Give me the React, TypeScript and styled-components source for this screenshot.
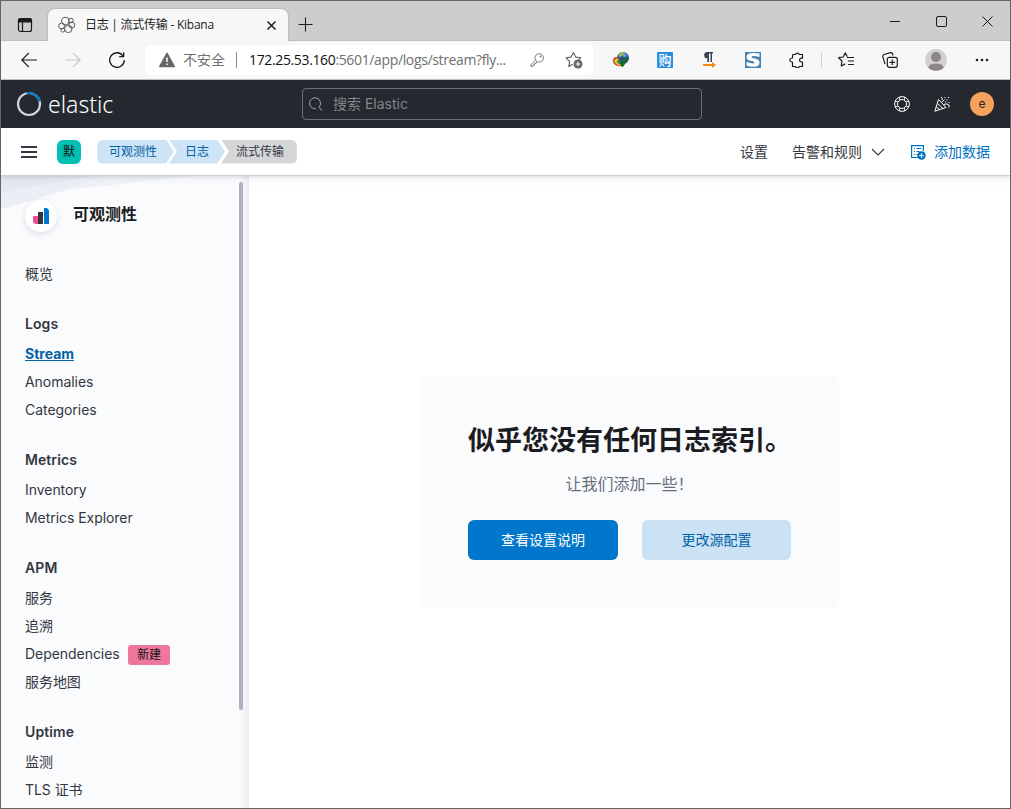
import React from 'react';
import styled, { createGlobalStyle, css } from 'styled-components';

const Global = createGlobalStyle`
  * { box-sizing: border-box; }
  html, body { margin: 0; padding: 0; overflow: hidden; }
  body { font-family: Inter, "Noto Sans CJK SC", sans-serif; font-size: 14px; color: #343741; background: #fff; }
`;

const Window = styled.div`
  width: 1011px;
  height: 809px;
  border: 1px solid #656365;
  display: flex;
  flex-direction: column;
  background: #fff;
  overflow: hidden;
`;

const TabStrip = styled.div`
  height: 40px;
  flex: none;
  display: flex;
  align-items: flex-end;
  background: #cdcdcd;
  border-bottom: 1px solid #c0c0c0;
`;

const Cell = styled.div<{ $w: number; $h?: number }>`
  width: ${(p) => p.$w}px;
  height: ${(p) => (p.$h ? `${p.$h}px` : '100%')};
  flex: none;
  display: flex;
  align-items: center;
  justify-content: center;
  svg { display: block; }
`;

const Tab = styled.div`
  width: 240px;
  height: 32px;
  margin-bottom: -1px;
  padding: 0 9px 0 10px;
  display: flex;
  align-items: center;
  background: #f7f7f7;
  border-radius: 7px 7px 0 0;
  box-shadow: 0 0 2px rgba(0, 0, 0, 0.25);
  clip-path: inset(-3px -3px 0 -3px);
  svg { display: block; flex: none; }
`;

const TabTitle = styled.span`
  margin-left: 9px;
  flex: 1;
  font: 12px/16px "Open Sans", "Noto Sans CJK SC", sans-serif;
  letter-spacing: -0.25px;
  color: #1b1b1b;
  white-space: nowrap;
`;

const Spacer = styled.div`
  flex: 1;
`;

const WindowControls = styled.div`
  height: 100%;
  padding-top: 1px;
  display: flex;
`;

const Toolbar = styled.div`
  height: 39px;
  flex: none;
  padding-left: 6px;
  display: flex;
  align-items: center;
  background: #f7f7f7;
  border-bottom: 1px solid #bcc0c2;
`;

const AddressBar = styled.div`
  width: 448px;
  height: 30px;
  margin: 0 6px;
  padding-left: 14px;
  display: flex;
  align-items: center;
  background: #fff;
  border-radius: 4px;
  font: 14px/20px "Open Sans", "Noto Sans CJK SC", sans-serif;
  color: #6f6f6f;
  white-space: nowrap;
  svg { display: block; flex: none; }
`;

const Insecure = styled.span`
  width: 54px;
  flex: none;
  margin-left: 8px;
  border-right: 1px solid #8a8a8a;
  line-height: 16px;
`;

const Url = styled.span`
  width: 272px;
  flex: none;
  margin-left: 12px;
  letter-spacing: -0.36px;
  b { font-weight: 400; color: #111; }
`;

const Divider = styled.div`
  width: 1px;
  height: 16px;
  margin: 0 2px;
  background: #d0d0d0;
`;

const BuyBadge = styled.div`
  width: 16px;
  height: 16px;
  background: #2b8ddf;
  border-radius: 1px;
  color: #fff;
  font: 500 13px/15px "Noto Sans CJK SC", sans-serif;
  text-align: center;
`;

const Header = styled.header`
  height: 48px;
  flex: none;
  display: grid;
  grid-template-columns: 301px 400px 1fr;
  align-items: center;
  background: #25282f;
`;

const Brand = styled.div`
  display: flex;
  align-items: center;
  padding-left: 15px;
  svg { display: block; }
`;

const Wordmark = styled.span`
  margin-left: 6px;
  font: 350 23px/28px "Noto Sans", "Open Sans", sans-serif;
  letter-spacing: 0;
  color: #fff;
`;

const Search = styled.div`
  height: 32px;
  padding-left: 5px;
  display: flex;
  align-items: center;
  gap: 9px;
  border: 1px solid #6c6f75;
  border-radius: 4px;
  color: #83868c;
  svg { display: block; }
  span { padding-bottom: 2px; }
`;

const HeaderActions = styled.div`
  display: flex;
  justify-content: flex-end;
  align-items: center;
  padding-right: 8px;
`;

const Avatar = styled.div`
  width: 24px;
  height: 24px;
  border-radius: 50%;
  background: #f5a35c;
  color: #222;
  font-size: 12px;
  line-height: 24px;
  text-align: center;
`;

const SubHeader = styled.nav`
  height: 48px;
  flex: none;
  position: relative;
  z-index: 1;
  display: flex;
  align-items: center;
  background: #fff;
  border-bottom: 1px solid #cbd0dc;
  box-shadow: 0 1px 3px rgba(60, 70, 100, 0.14), 0 3px 10px rgba(60, 70, 100, 0.06);
`;

const Burger = styled.div`
  width: 16px;
  height: 12px;
  margin: 0 20px;
  display: flex;
  flex-direction: column;
  justify-content: space-between;
  i { height: 2px; background: #343741; }
`;

const Space = styled.div`
  width: 24px;
  height: 24px;
  margin-right: 16px;
  border-radius: 6px;
  background: #00bfb3;
  color: #111;
  font-size: 12px;
  line-height: 23px;
  text-align: center;
`;

const Crumb = styled.span<{ $kind: 'first' | 'mid' | 'last' }>`
  height: 24px;
  font-size: 12px;
  line-height: 23px;
  background: #cce4f5;
  color: #0061a6;
  ${(p) => p.$kind === 'first' && css`
    width: 78px;
    padding-left: 12px;
    border-radius: 6px 0 0 6px;
    clip-path: polygon(0 0, 69px 0, 77px 50%, 69px 100%, 0 100%);
  `}
  ${(p) => p.$kind === 'mid' && css`
    width: 57px;
    margin-left: -6px;
    padding-left: 16px;
    clip-path: polygon(0 0, 48px 0, 56px 50%, 48px 100%, 0 100%, 8px 50%);
  `}
  ${(p) => p.$kind === 'last' && css`
    width: 76px;
    margin-left: -5px;
    padding-left: 15px;
    background: #d5d6d8;
    color: #343741;
    border-radius: 0 6px 6px 0;
    clip-path: polygon(0 0, 100% 0, 100% 100%, 0 100%, 8px 50%);
  `}
`;

const NavLink = styled.a<{ $kind?: 'menu' | 'primary' }>`
  display: flex;
  align-items: center;
  height: 24px;
  margin-right: ${(p) => (p.$kind === 'primary' ? 20 : p.$kind === 'menu' ? 16 : 24)}px;
  color: ${(p) => (p.$kind === 'primary' ? '#0071c2' : '#343741')};
  svg { display: block; }
`;

const DataIcon = styled.span`
  width: 24px;
  margin-left: -3px;
  margin-right: 3px;
  padding-left: 4px;
`;

const NavText = styled.span`
  padding-bottom: 2px;
`;

const Body = styled.div`
  flex: 1;
  min-height: 0;
  display: flex;
`;

const Sidebar = styled.aside`
  width: 248px;
  flex: none;
  padding-top: 6px;
  display: flex;
  background: linear-gradient(90deg, transparent 238px, #eceef2 248px), #fafbfd;
  position: relative;
`;

const Backdrop = styled.svg`
  position: absolute;
  left: 0;
  top: 0;
`;

const SideContent = styled.div`
  position: relative;
  width: 238px;
  padding: 18px 0 0 24px;
  overflow: hidden;
`;

const ScrollThumb = styled.div`
  width: 4px;
  height: 528px;
  border-radius: 2px;
  background: #adb1bb;
`;

const Solution = styled.div`
  display: flex;
  align-items: center;
  height: 32px;
  margin-bottom: 28px;
`;

const SolutionIcon = styled.div`
  width: 32px;
  height: 32px;
  border-radius: 50%;
  background: #fff;
  display: flex;
  align-items: center;
  justify-content: center;
  box-shadow: 0 2px 6px rgba(60, 70, 100, 0.16);
`;

const SolutionTitle = styled.h2`
  margin: 0 0 4px 16px;
  font-size: 16px;
  line-height: 24px;
  font-weight: 700;
  color: #1a1c21;
`;

const Group = styled.section`
  margin-bottom: 22px;
`;

const GroupTitle = styled.h3`
  margin: 0 0 2px;
  font-size: 14px;
  line-height: 28px;
  font-weight: 600;
  color: #343741;
  letter-spacing: 0.08px;
`;

const Item = styled.a<{ $active?: boolean }>`
  display: flex;
  align-items: center;
  height: 28px;
  padding-bottom: 2px;
  color: #343741;
  letter-spacing: -0.05px;
  ${(p) => p.$active && css`
    color: #0061a6;
    font-weight: 700;
    text-decoration: underline;
    letter-spacing: 0;
  `}
`;

const NewBadge = styled.span`
  width: 42px;
  height: 20px;
  margin: 4px 0 0 8.5px;
  border-radius: 3px;
  background: #ee789d;
  color: #111;
  font-size: 12px;
  line-height: 19px;
  text-align: center;
`;

const Main = styled.main`
  flex: 1;
  padding: 200px 0 0 171px;
`;

const Prompt = styled.div`
  width: 419px;
  height: 232px;
  padding: 49px 48px 48px;
  border-radius: 6px;
  background: #fafbfd;
  text-align: center;
`;

const PromptTitle = styled.h1`
  margin: 0;
  font-size: 27px;
  line-height: 32px;
  font-weight: 700;
  color: #1a1c21;
  white-space: nowrap;
`;

const PromptText = styled.p`
  margin: 15px 0 24px;
  font-size: 16px;
  line-height: 24px;
  color: #69707d;
`;

const PromptActions = styled.div`
  display: grid;
  grid-template-columns: 150px 149px;
  gap: 24px;
`;

const Button = styled.button<{ $fill?: boolean }>`
  height: 40px;
  padding: 0;
  border: 0;
  border-radius: 6px;
  font: 400 14px/20px Inter, "Noto Sans CJK SC", sans-serif;
  background: ${(p) => (p.$fill ? '#0077cc' : '#cbe2f4')};
  color: ${(p) => (p.$fill ? '#fff' : '#0061a6')};
`;

type IconProps = { s?: number; c?: string; w?: number; children: React.ReactNode };
const Icon = ({ s = 16, c = '#1b1b1b', w = 1.1, children }: IconProps) => (
  <svg width={s} height={s} viewBox={`0 0 ${s} ${s}`} fill="none" stroke={c} strokeWidth={w}>
    {children}
  </svg>
);

const groups: { title: string; items: { label: string; active?: boolean; badge?: string }[] }[] = [
  { title: 'Logs', items: [{ label: 'Stream', active: true }, { label: 'Anomalies' }, { label: 'Categories' }] },
  { title: 'Metrics', items: [{ label: 'Inventory' }, { label: 'Metrics Explorer' }] },
  { title: 'APM', items: [{ label: '服务' }, { label: '追溯' }, { label: 'Dependencies', badge: '新建' }, { label: '服务地图' }] },
  { title: 'Uptime', items: [{ label: '监测' }, { label: 'TLS 证书' }] },
];

const BrowserTabs = () => (
  <TabStrip>
    <Cell $w={47} $h={30}>
      <Icon w={1.2}>
        <rect x="1.5" y="1.5" width="13" height="13" rx="2" />
        <path d="M1.5 3.5a2 2 0 0 1 2-2h9a2 2 0 0 1 2 2V5h-13z" fill="#1b1b1b" />
        <path d="M5.5 5v9.5" />
      </Icon>
    </Cell>
    <Tab>
      <Icon s={18} c="#5c5c5c" w={1}>
        <circle cx="7.3" cy="5" r="3.8" />
        <circle cx="13" cy="4.5" r="2.3" />
        <circle cx="3.6" cy="10" r="2.9" />
        <circle cx="13.8" cy="9" r="3" />
        <circle cx="10.3" cy="12.9" r="3.7" />
        <circle cx="4.8" cy="14.2" r="1.9" />
      </Icon>
      <TabTitle>日志 | 流式传输 - Kibana</TabTitle>
      <Icon w={1.5}><path d="M4.5 4.5l8 8M12.5 4.5l-8 8" /></Icon>
    </Tab>
    <Cell $w={35} $h={31}>
      <Icon s={15}><path d="M7.5 .5v14M.5 7.5h14" /></Icon>
    </Cell>
    <Spacer />
    <WindowControls>
      <Cell $w={46}><Icon s={10} w={1}><path d="M0 5.5h10" /></Icon></Cell>
      <Cell $w={46}><Icon s={11} w={1}><rect x=".5" y=".5" width="10" height="10" rx="1.5" /></Icon></Cell>
      <Cell $w={46}><Icon s={11} w={1}><path d="M.5 .5l10 10M10.5 .5l-10 10" /></Icon></Cell>
    </WindowControls>
  </TabStrip>
);

const BrowserToolbar = () => (
  <Toolbar>
    <Cell $w={44}><Icon><path d="M16 8H.8M7.8 1L.8 8l7 7" /></Icon></Cell>
    <Cell $w={44}><Icon c="#c8c8c8"><path d="M0 8h15.2M8.2 1l7 7-7 7" /></Icon></Cell>
    <Cell $w={44}><Icon w={1.3}><path d="M14.2 4.2A7.3 7.3 0 1 0 15.3 8M14.7 .2v4.5h-4.5" /></Icon></Cell>
    <AddressBar>
      <Icon c="#666">
        <path d="M8 1.3L15.3 14.5H.7z" fill="#666" strokeLinejoin="round" strokeWidth={1.5} />
        <path d="M8 5.5v4.5M8 11.5v1.5" stroke="#fff" strokeWidth={1.5} />
      </Icon>
      <Insecure>不安全</Insecure>
      <Url><b>172.25.53.160</b>:5601/app/logs/stream?fly...</Url>
      <Cell $w={32}>
        <Icon c="#777" s={14} w={1}>
          <path d="M5.4 7.3L.8 11.9V13.3H3.2V11.8H4.7V10.3H6.2L7 8.7" strokeLinejoin="round" />
          <circle cx="9.2" cy="4.9" r="4.2" />
          <circle cx="10.6" cy="3.5" r=".6" />
        </Icon>
      </Cell>
      <Cell $w={42}>
        <Icon s={18} c="#5c5c5c" w={1.1}>
          <path d="M7.7 13.2l-3.9 2.2.8-5.1L1 6.8l5-.7 2.5-4.6 2.2 4.6 5 .7-2.5 2.3" strokeLinejoin="round" />
          <circle cx="13" cy="13" r="4.5" fill="#666" stroke="none" />
          <path d="M13 10.7v4.6M10.7 13h4.6" stroke="#fff" />
        </Icon>
      </Cell>
    </AddressBar>
    <Cell $w={44}>
      <svg width="18" height="16" viewBox="0 0 18 16">
        <circle cx="11" cy="6" r="6" fill="#264f94" />
        <path d="M6.5 2.5q3-3.5 6.5-2l-2 3-4 2z" fill="#9db84a" />
        <path d="M11 1.5q3-1 4 2l-2 2-2-1z" fill="#5f9fe0" />
        <path d="M1 9Q1 4.5 5 5l2 2 3 7Q1.5 15 1 9z" fill="#d9432f" />
        <path d="M2.5 9Q3 6 5.5 6.5L10 13q-6.5 1-7.5-4z" fill="#f0d43a" />
        <path d="M4.5 9.5Q5 7.5 7 8l3 4.5q-4.5 0-5.5-3z" fill="#3b9a3d" />
        <path d="M16.5 7L10.5 15.5 6.5 9.5l2.5.3L12 5z" fill="#176a28" />
      </svg>
    </Cell>
    <Cell $w={44}><BuyBadge>购</BuyBadge></Cell>
    <Cell $w={44}>
      <svg width="16" height="16" viewBox="0 0 16 16">
        <path d="M12 0v1.5h-1V10H9.5V1.5H8V10H6.3V6.3A3.15 3.15 0 0 1 6.3 0z" fill="#3b4653" />
        <path d="M2 12h9v-2l4 3-4 3v-2H2z" fill="#fb8713" />
      </svg>
    </Cell>
    <Cell $w={44}>
      <svg width="16" height="16" viewBox="0 0 16 16">
        <rect width="16" height="16" fill="#4682b4" />
        <path d="M14.5 1.5V5q-8-2.2-8 0 0 1 4 1.7 4 .8 4 4 0 4-6 4-4.5 0-7-1.2V10q8 2.5 8 .5 0-1-4-1.7-4-.8-4-3.9 0-3.9 6-3.9 4 0 7 .5z" fill="#fff" />
      </svg>
    </Cell>
    <Cell $w={44}>
      <Icon w={1.2}>
        <path d="M4.5 2.5h2a2 2 0 0 1 3.8 0h3.2v3.7h-1a1.9 1.9 0 0 0 0 3.8h1v4.5h-3.2a2 2 0 0 1-3.8 0h-3V10h-.6a2 2 0 0 1 0-4h.6V3.5a1 1 0 0 1 1-1z" strokeLinejoin="round" />
      </Icon>
    </Cell>
    <Divider />
    <Cell $w={44}>
      <Icon w={1.2}>
        <path d="M9.3 4.7L7.2 .9 5.2 5l-4.6.7L4 9l-.8 5 4-2.1M9 5.5h7M10 9h6M10 12.5h6" strokeLinejoin="round" />
      </Icon>
    </Cell>
    <Cell $w={44}>
      <Icon w={1.2}>
        <rect x="5.3" y="5.3" width="10" height="10" rx="2" />
        <path d="M10.3 7.5v5.6M7.5 10.3h5.6M3 12.2L.8 4.7q-.3-1.6 1.2-2.2L8.5.7q1.5-.3 2 1l.5 1.8" />
      </Icon>
    </Cell>
    <Cell $w={48}>
      <svg width="22" height="22" viewBox="0 0 22 22">
        <circle cx="11" cy="11" r="11" fill="#d2d0ce" />
        <circle cx="11" cy="8" r="5" fill="#8b8685" />
        <path d="M3.2 18.5a8 5 0 0 1 15.6 0A11 11 0 0 1 3.2 18.5z" fill="#8b8685" />
      </svg>
    </Cell>
    <Cell $w={44}>
      <svg width="14" height="4" viewBox="0 0 14 4" fill="#1b1b1b">
        <circle cx="2" cy="2" r="1.3" /><circle cx="7" cy="2" r="1.3" /><circle cx="12" cy="2" r="1.3" />
      </svg>
    </Cell>
  </Toolbar>
);

const KibanaHeader = () => (
  <Header>
    <Brand>
      <svg width="26" height="26" viewBox="0 0 26 26" fill="none" strokeWidth="2.2">
        <circle cx="13" cy="13" r="11" stroke="#cfd5e0" />
        <path d="M10.5 2.3A11 11 0 0 1 23.8 10.5" stroke="#0077cc" />
      </svg>
      <Wordmark>elastic</Wordmark>
    </Brand>
    <Search>
      <Icon c="#a5a8ad" w={1}><path d="M8 12.7A5.5 5.5 0 1 1 11.5 10.5M10.7 10.7l3.3 4" /></Icon>
      <span>搜索 Elastic</span>
    </Search>
    <HeaderActions>
      <Cell $w={40}>
        <Icon c="#fff" w={1}>
          <circle cx="8" cy="8" r="7.4" /><circle cx="8" cy="8" r="4.5" />
          <path d="M5.5 1v3.5M10.5 1v3.5M5.5 11.5V15M10.5 11.5V15M1 5.5h3.5M1 10.5h3.5M11.5 5.5H15M11.5 10.5H15" strokeWidth={0.8} />
        </Icon>
      </Cell>
      <Cell $w={40}>
        <Icon c="#fff" w={1}>
          <path d="M4.5 3.5L.8 15.2 12 11.5zM3.5 7.5l5.5 5M2.3 11l3.5 2.7M7.5 6.5l3-3M9.5 8.5q3.5-1.5 5.500.5v2.5M7 1q2 1 1 3" strokeLinejoin="round" />
          <path d="M10.5 1.5h1M14 1.5h1M12.5 4h1M14.5 6.5h1M11 6h1" />
        </Icon>
      </Cell>
      <Cell $w={40}><Avatar>e</Avatar></Cell>
    </HeaderActions>
  </Header>
);

const KibanaNav = () => (
  <SubHeader>
    <Burger><i /><i /><i /></Burger>
    <Space>默</Space>
    <Crumb $kind="first">可观测性</Crumb>
    <Crumb $kind="mid">日志</Crumb>
    <Crumb $kind="last">流式传输</Crumb>
    <Spacer />
    <NavLink><NavText>设置</NavText></NavLink>
    <NavLink $kind="menu">
      <NavText>告警和规则</NavText>
      <Cell $w={32}><Icon c="#343741"><path d="M2 5l6 6 6-6" /></Icon></Cell>
    </NavLink>
    <NavLink $kind="primary">
      <DataIcon>
        <Icon c="#0071c2" w={1.2}>
          <path d="M7 13.5H.6V1.6H12.4V7M3 4.5h1M5.5 4.5h5M3 7.5h1M5.5 7.5h3M3 10.5h1M5.5 10.5h1.5" />
          <circle cx="10.5" cy="11.5" r="4.2" fill="#0071c2" stroke="none" />
          <path d="M10.5 9.3v4.4M8.3 11.5h4.4" stroke="#fff" />
        </Icon>
      </DataIcon>
      <NavText>添加数据</NavText>
    </NavLink>
  </SubHeader>
);

const SideNav = () => (
  <Sidebar>
    <Backdrop width="248" height="60" viewBox="0 0 248 60">
      <path d="M0 0H190L66 14 0 33z" fill="#f0f2f7" />
      <path d="M0 0H102L66 14 0 33z" fill="#ebeef5" />
      <path d="M0 0H90L40 9 0 16z" fill="#e4e8f1" />
    </Backdrop>
    <SideContent>
      <Solution>
        <SolutionIcon>
          <svg width="16" height="16" viewBox="0 0 16 16">
            <path d="M0 8h5v8H3a3 3 0 0 1-3-3z" fill="#f04e98" />
            <path d="M5 4h5v12H5z" fill="#343741" />
            <path d="M11 0h1.5A3.5 3.5 0 0 1 16 3.5V16h-5z" fill="#0077cc" />
          </svg>
        </SolutionIcon>
        <SolutionTitle>可观测性</SolutionTitle>
      </Solution>
      <Group><Item>概览</Item></Group>
      {groups.map((g) => (
        <Group key={g.title}>
          <GroupTitle>{g.title}</GroupTitle>
          {g.items.map((i) => (
            <Item key={i.label} $active={i.active}>
              {i.label}
              {i.badge && <NewBadge>{i.badge}</NewBadge>}
            </Item>
          ))}
        </Group>
      ))}
    </SideContent>
    <ScrollThumb />
  </Sidebar>
);

export default function App() {
  return (
    <Window>
      <Global />
      <BrowserTabs />
      <BrowserToolbar />
      <KibanaHeader />
      <KibanaNav />
      <Body>
        <SideNav />
        <Main>
          <Prompt>
            <PromptTitle>似乎您没有任何日志索引。</PromptTitle>
            <PromptText>让我们添加一些！</PromptText>
            <PromptActions>
              <Button $fill>查看设置说明</Button>
              <Button>更改源配置</Button>
            </PromptActions>
          </Prompt>
        </Main>
      </Body>
    </Window>
  );
}
